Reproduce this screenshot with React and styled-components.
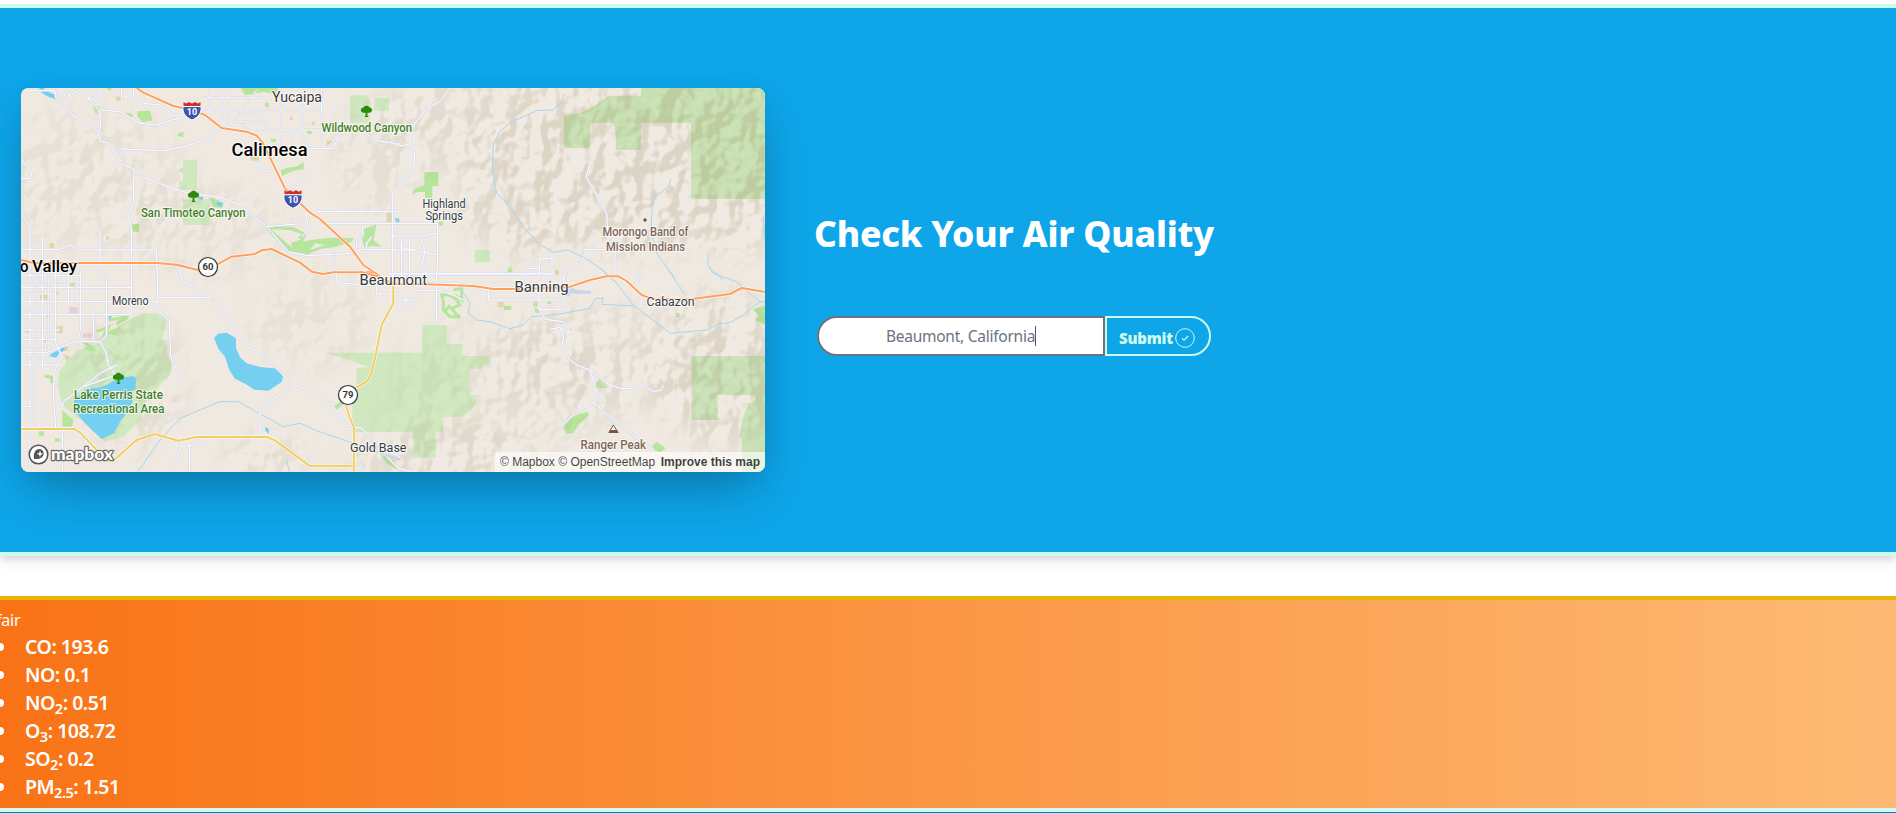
import React from 'react';
import styled, { createGlobalStyle } from 'styled-components';

const GlobalStyle = createGlobalStyle`
  *, *::before, *::after { box-sizing: border-box; }
  body {
    margin: 0;
    background: #fff;
    overflow: hidden;
    font-family: 'Segoe UI', 'Noto Sans', 'Open Sans', sans-serif;
    font-size: 16px;
    line-height: 24px;
  }
`;

const Page = styled.div`
  display: flex;
  flex-direction: column;
  height: 813px;
  padding-top: 4px;
  overflow: hidden;
`;

const Hero = styled.section`
  display: flex;
  align-items: center;
  gap: 47px;
  height: 552px;
  flex: none;
  padding-left: 21px;
  background: #0ea5e9;
  border-top: 4px solid #ccfbf1;
  border-bottom: 4px solid #ccfbf1;
  box-shadow: 0 4px 6px -1px rgba(0, 0, 0, 0.1), 0 6px 12px 0 rgba(0, 0, 0, 0.07);
`;

const MapCard = styled.div`
  position: relative;
  width: 744px;
  height: 384px;
  flex: none;
  border-radius: 8px;
  background: #efe9e1;
  box-shadow: 0 25px 50px -12px rgba(0, 0, 0, 0.25), 0 10px 30px rgba(0, 0, 0, 0.07);
`;

const MapCanvas = styled.svg`
  display: block;
  width: 744px;
  height: 384px;
  border-radius: 8px;
`;

const Attribution = styled.div`
  position: absolute;
  right: 0;
  bottom: 0;
  display: flex;
  justify-content: space-between;
  width: 270px;
  height: 20px;
  padding: 0 5px;
  border-radius: 0 0 8px 0;
  background: rgba(255, 255, 255, 0.6);
  color: rgba(0, 0, 0, 0.75);
  font: 12px/20px 'Liberation Sans', Arial, sans-serif;
  white-space: nowrap;
`;

const Land = styled.path`
  fill: ${(p) => p.$fill || '#d0e8bf'};
`;
const Casing = styled.path`
  fill: none;
  stroke: #d6d9ea;
  stroke-width: ${(p) => p.$w + 4};
  stroke-linejoin: round;
`;
const Street = styled.path`
  fill: none;
  stroke: #fff;
  stroke-width: ${(p) => p.$w};
  stroke-linejoin: round;
`;
const HighwayHalo = styled.path`
  fill: none;
  stroke: #fff;
  stroke-opacity: 0.75;
  stroke-width: 10;
  stroke-linejoin: round;
`;
const Highway = styled.path`
  fill: none;
  stroke: ${(p) => p.$color};
  stroke-width: ${(p) => p.$w || 6};
  stroke-linejoin: round;
`;
const Stream = styled.path`
  fill: none;
  stroke: #a9d5ef;
  stroke-width: 3;
`;
const Label = styled.text`
  font-family: Roboto, 'Liberation Sans', sans-serif;
  font-size: ${(p) => p.$size || 12}px;
  font-weight: ${(p) => p.$weight || 400};
  fill: ${(p) => p.$color || '#333b42'};
  stroke: rgba(255, 255, 255, 0.75);
  stroke-width: 2px;
  stroke-linejoin: round;
  paint-order: stroke;
`;

const Road = ({ d, w = 4 }) => (
  <>
    <Casing d={d} $w={w} />
    <Street d={d} $w={w} />
  </>
);
const Freeway = ({ d, color = '#ff9f5a', w }) => (
  <>
    <HighwayHalo d={d} />
    <Highway d={d} $color={color} $w={w} />
  </>
);

/* Each sheet of the map is drawn at three units to the pixel. */
const NW = 'translate(0 70) scale(.33333)';
const NE = 'translate(390 70) scale(.33333)';
const SW = 'translate(0 270) scale(.33333)';
const SE = 'translate(390 270) scale(.33333)';

const Tree = ({ x, y }) => (
  <g transform={`translate(${x} ${y})`} fill="#2b8a0b">
    <path d="M-5.5-.5C-6-3-4-4-3-4-2-6.500 2-6.500 3-4 5-4 6-2.500 5.300-.5 4.500 1.500 2 1.200.9 1.200V4l1.200 1.500h-4.200L-.9 4V1.200C-2 1.200-4.800 1.500-5.500-.5Z" />
  </g>
);

const Interstate = ({ x, y }) => (
  <g transform={`translate(${x} ${y})`}>
    <path d="M-8.500-9 -6-7.500 -3-9 0-7.500 3-9 6-7.500 8.500-9V-5H-8.500Z" fill="#cf2f2b" />
    <path d="M-9-4.500H9C10 2 6 6.500 0 9-6 6.500-10 2-9-4.500Z" fill="#3f55ac" stroke="#fff" strokeWidth="1" />
    <text y="4" textAnchor="middle" fontFamily="Roboto, sans-serif" fontSize="9" fontWeight="700" fill="#fff">10</text>
  </g>
);

const StateRoute = ({ x, y, n }) => (
  <g transform={`translate(${x} ${y})`}>
    <circle r="9.500" fill="#fff" stroke="#333" strokeWidth="1.200" />
    <text y="3.400" textAnchor="middle" fontFamily="Roboto, sans-serif" fontSize="9.500" fontWeight="700" fill="#333">{n}</text>
  </g>
);

const labels = [
  { t: 'Yucaipa', x: 272, y: 102, w: 50, size: 15 },
  { t: 'Calimesa', x: 231.5, y: 155.5, w: 76, size: 17.5, weight: 500, color: '#000' },
  { t: 'o', x: 20, y: 272, w: 8.5, size: 16.5, weight: 500, color: '#000' },
  { t: 'Valley', x: 32, y: 272, w: 45, size: 16.5, weight: 500, color: '#000' },
  { t: 'Beaumont', x: 359.5, y: 285.3, w: 67.5, size: 15 },
  { t: 'Banning', x: 514.5, y: 292, w: 54, size: 15 },
  { t: 'Cabazon', x: 646.5, y: 306, w: 48, size: 12.5 },
  { t: 'Moreno', x: 112, y: 305, w: 36.500, size: 12 },
  { t: 'Highland', x: 422.5, y: 208, w: 43, size: 12 },
  { t: 'Springs', x: 425.5, y: 220, w: 37.5, size: 12 },
  { t: 'Gold Base', x: 350, y: 451.7, w: 56.500, size: 12.5 },
  { t: 'Wildwood Canyon', x: 321.5, y: 131.500, w: 90.5, weight: 500, color: '#438126' },
  { t: 'San Timoteo Canyon', x: 141, y: 217, w: 104.500, weight: 500, color: '#438126' },
  { t: 'Lake Perris State', x: 74, y: 399, w: 89, weight: 500, color: '#438126' },
  { t: 'Recreational Area', x: 73, y: 413, w: 91.500, weight: 500, color: '#438126' },
  { t: 'Morongo Band of', x: 602.5, y: 236.3, w: 86, weight: 500, color: '#7e6657' },
  { t: 'Mission Indians', x: 606, y: 250.5, w: 79, weight: 500, color: '#7e6657' },
  { t: 'Ranger Peak', x: 580.5, y: 449.3, w: 65.500, weight: 500, color: '#7e6657' },
];

function AreaMap() {
  return (
    <MapCanvas viewBox="21 88 744 384" role="img" aria-label="Map of Beaumont, California">
      <defs>
        <filter id="relief" x="0" y="0" width="1" height="1" colorInterpolationFilters="sRGB">
          <feTurbulence type="fractalNoise" baseFrequency="0.034 0.032" numOctaves="3" seed="23" />
          <feDiffuseLighting surfaceScale="24" diffuseConstant="1" lightingColor="#fff" result="lit">
            <feDistantLight azimuth="215" elevation="45" />
          </feDiffuseLighting>
          <feColorMatrix type="matrix" values="0 0 0 0 .66  0 0 0 0 .61  0 0 0 0 .46  -1.500 0 0 0 1.060" />
          <feComponentTransfer>
            <feFuncA type="discrete" tableValues="0 .08 .14 .18 .23 .28" />
          </feComponentTransfer>
        </filter>
        <filter id="glints" x="0" y="0" width="1" height="1" colorInterpolationFilters="sRGB">
          <feTurbulence type="fractalNoise" baseFrequency="0.034 0.032" numOctaves="3" seed="23" />
          <feDiffuseLighting surfaceScale="24" diffuseConstant="1" lightingColor="#fff">
            <feDistantLight azimuth="215" elevation="45" />
          </feDiffuseLighting>
          <feColorMatrix type="matrix" values="0 0 0 0 1  0 0 0 0 1  0 0 0 0 .94  2 0 0 0 -1.500" />
          <feComponentTransfer>
            <feFuncA type="discrete" tableValues="0 .1 .18 .24" />
          </feComponentTransfer>
        </filter>
        <radialGradient id="soft">
          <stop offset="0" stopColor="#fff" />
          <stop offset=".6" stopColor="#fff" stopOpacity=".75" />
          <stop offset="1" stopColor="#fff" stopOpacity="0" />
        </radialGradient>
        <mask id="hills" maskUnits="userSpaceOnUse" x="21" y="88" width="744" height="384">
          <g fill="url(#soft)">
            <ellipse cx="660" cy="120" rx="200" ry="95" />
            <ellipse cx="740" cy="165" rx="90" ry="110" />
            <ellipse cx="530" cy="190" rx="90" ry="85" />
            <ellipse cx="470" cy="120" rx="110" ry="70" opacity=".7" />
            <ellipse cx="640" cy="200" rx="120" ry="70" />
            <ellipse cx="380" cy="155" rx="60" ry="70" opacity=".5" />
            <ellipse cx="90" cy="180" rx="120" ry="90" opacity=".5" />
            <ellipse cx="200" cy="230" rx="110" ry="60" opacity=".4" />
            <ellipse cx="310" cy="320" rx="80" ry="65" opacity=".4" />
            <ellipse cx="600" cy="360" rx="130" ry="70" opacity=".7" />
            <ellipse cx="500" cy="390" rx="140" ry="90" opacity=".5" />
            <ellipse cx="720" cy="370" rx="80" ry="100" />
            <ellipse cx="440" cy="460" rx="120" ry="50" opacity=".7" />
            <ellipse cx="265" cy="460" rx="55" ry="40" opacity=".5" />
            <ellipse cx="130" cy="380" rx="70" ry="85" opacity=".7" />
          </g>
        </mask>
      </defs>
      <rect x="21" y="88" width="744" height="384" fill="#efe9e1" />

      {/* parks and forest */}
      <g transform={NE}>
        <Land $fill="#c6deb0" d="M522 137 568 130 610 110 656 77H753V54H1125V387H903V158H753V239H677V185L672 158H600V235H522Z" />
        <Land $fill="#b6e69b" d="M103 306H145V348H127V384H105V366L82 366 66 376 72 358 103 345ZM350 608 360 588 370 608ZM145 455H159V467H147Z" />
        <Land d="M255 540H300V576H255Z" $fill="#cde9bb" />
        <path d="M822 158V108H836V127H847V158M677 185H695V178H705V206H694V238" fill="none" stroke="#b6e69b" strokeWidth="2" />
      </g>
      <g transform={NW}>
        <Land d="M549 269H591V360H537V333H549V309L530 304 549 290ZM549 388H629V465H549ZM1050 76H1100L1112 95 1110 158H1050ZM1122 84H1167V122H1122Z" />
        <Land $fill="#b6e69b" d="M413 124 450 122 458 152 430 155 412 140ZM375 126 400 135 395 145ZM535 190 550 184V202L533 198ZM395 462H417V485H395ZM842 300 868 292 890 290 911 275V298L880 302 846 318ZM628 384 655 390 671 406 664 415 640 410ZM795 98H806V112H795ZM722 54H835L828 70 790 66 760 72 735 76ZM813 206H828V216H813ZM318 54H340L328 62ZM920 183H935V192H922Z" />
        <Land $fill="#b6e69b" fillRule="evenodd" d="M798 473 818 466 880 472 918 490 917 500 908 515 935 510 980 504 1025 503 1062 505 1050 518 1000 532 965 536 925 552 865 546 808 488ZM813 478 878 534 872 520 905 508 892 505 905 492 870 480ZM945 520 930 540 975 525ZM1093 476 1130 463 1120 510 1146 532 1118 527 1095 535 1086 510Z" />
        <Land $fill="#dbd9a9" d="M148 519H162V534H148ZM752 258H777V272H752ZM1160 425H1176V457H1160ZM980 212H998L980 230ZM318 500H327V509H318ZM345 80H362V92H350ZM870 140H878V150H870ZM935 155H945V165H935Z" />
        <Land $fill="#cfdfb4" d="M280 110 300 107 295 132 284 130Z" />
      </g>
      <g transform={SW}>
        <Land d="M400 142 430 130H470L500 148 495 175 487 200 502 230V255L515 280V310L475 350 462 380 430 400 425 445 370 500 315 514 280 480 230 440 187 405 173 345 178 305 205 270 235 240 300 220 340 180Z" />
        <Land d="M1158 248H1200V485H1077V412L1060 370 1130 320 1132 292 1158 294Z" />
        <Land $fill="#b6e69b" d="M187 420 220 450 216 470H187ZM1000 410 1030 388 1028 405 1010 419ZM116 484H132V497H116ZM165 505H179V515H165ZM140 134H150V144H140ZM213 38H225V50H213ZM1140 552 1180 570 1192 600 1160 580Z" />
        <g fill="none" stroke="#b6e69b" strokeWidth="9">
          <path d="M325 150 385 140 350 160M290 185 325 172 300 215M320 190 360 174 338 195M250 215 285 240 255 235M134 318 155 322V340" />
        </g>
        <Land $fill="#dbd9a9" d="M170 168H188V190H170ZM185 230H204V242H185ZM205 42H220V56H205ZM120 75H143V89H120ZM165 64H176V74H165ZM128 204H138V218H128ZM190 252 212 260 200 276ZM75 180H90V188H75Z" />
        <Land $fill="#e9cfda" d="M207 111H234V131H207ZM248 192 275 188V203H250Z" />
      </g>
      <g transform={SE}>
        <Land d="M-192 248H96V165H170V222H217V258H297V280L270 297H236V375H259V405L240 420 217 440H160V486H138V563H70V486H-113V412L-100 360V294L-60 292Z" />
        <Land $fill="#c9e0b6" d="M905 258H1125V605H1055V505L1047 500 1060 440 1075 400 1095 396V375H983V450H905Z" />
        <Land $fill="#b6e69b" d="M520 470 545 440 590 425 598 435 570 460 550 490 530 492ZM787 527 800 515 827 535 812 547 795 542ZM342 107H364V120H342ZM857 129H869V140H857ZM1088 118 1125 108V165L1095 150 1108 138ZM432 113 447 118 445 130 436 128ZM473 92H483V102H473Z" />
        <Land $fill="#c3e4ae" d="M611 352 630 322 655 355Z" />
        <path d="M155 75H180L200 90 210 105 185 115 200 135 210 140H180L160 120V95ZM180 105 165 125M190 60 215 55V90L195 75" fill="none" stroke="#b6e69b" strokeWidth="9" />
        <Land $fill="#dbd9a9" d="M323 95H341V112H323ZM430 93H445V110H430ZM495 0H507V15H495ZM60 15H72V26H60Z" />
        <Land $fill="#cdd4ea" d="M535 50 565 60 603 63V71H540V82L525 75Z" />
      </g>

      <rect x="21" y="88" width="744" height="384" filter="url(#relief)" mask="url(#hills)" />
      <rect x="21" y="88" width="744" height="384" filter="url(#glints)" mask="url(#hills)" />

      {/* lakes */}
      <g transform={SW} fill="#75cff0">
        <path d="M642 204 655 191 680 188 708 205V235L720 262 740 280 780 291 835 296 849 320 845 336 805 362 763 359 737 342 705 326 688 300 675 260 655 236Z" />
        <path d="M345 330 375 322 400 318 409 325 406 358 390 365 398 395 372 440 360 455 342 490 305 507 270 475 238 440 222 415V390L258 358 300 352 320 345Z" />
        <path d="M340 360 372 372 355 390 340 385Z" fill="#dfe5bf" />
        <path d="M148 255 165 245 190 232 196 240 178 250 165 267ZM795 470 806 476 807 492 796 482ZM325 138H336L328 150Z" />
      </g>
      <g transform={NW} fill="#75cff0">
        <path d="M117 54H130L150 68 166 74V88L140 78 125 68ZM650 395 670 398 664 410 650 406ZM593 380 610 382 608 390 597 388ZM1185 443 1198 448V456H1188Z" />
      </g>

      {/* streams */}
      <g transform={NE}>
        <Stream d="M523 72 515 95 490 120 440 122 400 140 360 158 330 185 310 222 307 300 320 370 360 410 400 470 450 525 490 547 535 540 560 553 585 564 640 602 680 640" />
        <Stream d="M842 328 835 350 788 385 783 480 800 550 855 625M955 550 953 585 1000 630M1120 440 1125 510" />
      </g>
      <g transform={SW}>
        <Stream d="M415 604 480 510 540 445 660 395 715 395 850 470 900 460 950 482 1090 530 1200 570M860 570 868 605" />
      </g>
      <g transform={SE}>
        <Stream d="M215 60 240 100 235 130 260 150 300 155 360 176 400 165 425 140 460 138 520 130 600 115 615 85 640 85 635 103 735 108" />
        <Stream d="M630 -5 680 40 730 105 840 190 950 180 985 162 1020 158 1060 135 1110 95 1085 75 1040 35 970 10 955 -10M835 0 885 75M1110 95H1125" />
      </g>

      {/* local streets */}
      <g transform={NW}>
        <Road w={3} d="M64 62H165L168 85 212 130 290 180 302 214 325 218 370 285 405 298 430 322 500 348 560 368 660 382 720 405 800 470 865 545 920 557 1050 551 1085 538H1200" />
        <Road w={3} d="M290 200 302 165 298 120 360 125 420 160 470 165 515 150 565 142M350 248 362 237 490 242 550 230 590 218 622 205 665 170" />
        <Road w={3} d="M402 300 400 400 384 440 395 478V630M64 428 90 475V630M127 498V630M300 480V630M64 538H180L210 525 235 540H470V630M170 62 200 80 240 60 262 85 298 120M200 80 225 54M262 85 300 60M300 60 300 95 262 85M370 80 400 82 430 100 480 105 530 140M365 54V90M400 82V54" />
        <Road w={2} d="M606 120H965V100M610 82H790M665 70V155M682 70V155M628 54V120M720 128 790 135M843 54V230M908 54V200L930 235M965 54V205M700 155 770 60M720 155 745 180H890L910 173H965M850 180 878 185V232M1004 551V630M530 590 540 630M665 170 700 155 790 153 800 165V180" />
        <Road w={3} d="M770 278 785 300 810 305M855 365 900 340 928 297M918 430 925 480 905 500M918 430 950 425H1200M915 440 890 462 800 470M950 440 970 460H1200M930 235H1000L1020 190M1095 160V190L1130 212 1200 222M1070 540V515L1090 495 1087 465M1100 540V520L1115 500M64 265 95 310 92 325 64 325" />
      </g>
      <g transform={NE}>
        <Road w={3} d="M180 54 150 95 110 115 60 180V225L75 250 70 300 8 370V630M0 217 35 228 60 222M600 285 588 320 620 375 650 430 655 520M675 540V612M675 538H585V560L523 612V640M448 566H486V630M448 566V630M408 595H448M408 595V630M0 460H143V630M0 498H90L143 490M8 500 40 535 143 555M35 500V630M58 500V630M0 540H75M90 500 105 540 95 590 120 605M0 614H495M755 612 730 650" />
      </g>
      <g transform={SW}>
        <Road w={3} d="M300 0 320 20V195L300 215H225L185 230 140 248H64M90 0V605M300 215 318 245 325 285 350 320M64 16H240M64 52H395M64 95H472V0M64 133H395V0M472 95V115L508 155 512 260 547 335M128 0V300M166 0V215L185 260 165 300 160 360 167 475 188 490V605M205 0V100M242 0V175L235 205M64 180H180M64 208H170M64 285H175M64 410H90M132 402V475M280 133V210M187 415 190 395 250 350 300 310 350 285M250 350 340 318" />
        <Road w={3} d="M535 -10 550 35 630 80 690 150 730 225 780 245 880 345 940 365 1000 410 1040 465 1085 475 1150 540 1200 560M472 82H630M880 345 780 415V500M430 605 450 560M508 605 545 530V515M568 605V520M545 530 590 525 600 508M930 590V605M1010 0V38L1130 48V72H1200M205 470 220 490 250 500 260 520M64 540H90M1067 590 1100 605" />
        <Road w={2} d="M110 0V240M146 0V240M64 35H240M64 70H160M64 120H160M64 150H120M64 230H140M90 265H180M104 240V475M225 50V95" />
      </g>
      <g transform={SE}>
        <Road w={3} d="M447 115 465 148 520 155 543 190 510 172 478 178M510 172 520 200 515 235 545 245 535 265 560 285 600 300 650 340 690 355 735 357 760 343 790 365 815 360 820 345M600 300 612 340 622 380 612 398 560 425 520 465M612 398 660 440 690 460 730 495 790 540M0 10H490V0M35 -10V40M10 40H200L295 60V90H520V15M447 0V118H525V90M140 0V150M48 85V112L70 115 80 90H10M160 65 190 75 218 90M85 62H150M108 0V35M755 10 735 45M753 75V110H765M-10 560 25 595 60 605" />
      </g>

      {/* highways */}
      <g transform={SW}>
        <Freeway color="#f2cd60" d="M64 477H222L240 487 320 572 345 568 410 510 465 492 535 512 590 501H800L825 511 928 587H1065" />
        <Freeway color="#f2cd60" d="M1180 45V100L1145 165 1128 250 1115 310 1100 335 1070 352M1038 405 1048 440 1063 475 1061 605" />
      </g>
      <g transform={NW}>
        <Freeway d="M410 54 430 68 520 108 575 120 615 135 665 174 740 185 770 197 788 218 855 355 880 380 930 428 960 447 1050 530 1090 585 1140 618" />
        <Freeway d="M64 570 100 579H470L530 584 590 599 625 592 655 582 695 560 765 552 785 541 815 537 900 578 935 605 970 612 1000 607H1125" />
      </g>
      <g transform={SE}>
        <Freeway d="M-90 5 -40 18 10 42 110 43 250 48 310 57H380L535 52 600 30 650 19H685L710 33 755 75 790 88H900L1020 72 1055 54 1125 66" />
      </g>

      <Interstate x={192} y={111} />
      <Interstate x={293} y={199.300} />
      <StateRoute x={208} y={267} n="60" />
      <StateRoute x={348} y={395} n="79" />
      <Tree x={366.500} y={111.500} />
      <Tree x={193.500} y={196.500} />
      <Tree x={118.500} y={378.500} />
      <circle cx="645" cy="220" r="2.200" fill="#7a4f3a" stroke="#fff" strokeWidth=".8" />
      <path d="M609 432.500 613.300 425 618 432.500Z" fill="#fff" stroke="#7a5542" strokeWidth="1" />
      <path d="M610 430 H617 L618.500 433H608.500Z" fill="#7a5542" />

      {labels.map((l) => (
        <Label key={l.t} x={l.x} y={l.y} textLength={l.w} lengthAdjust="spacingAndGlyphs" $size={l.size} $weight={l.weight} $color={l.color}>
          {l.t}
        </Label>
      ))}

      {/* provider logo */}
      <circle cx="38.500" cy="454.500" r="9.300" fill="#fff" stroke="#555" strokeWidth="1.600" />
      <path d="M34 459C33 452 36 449 39.500 449A4.600 4.600 0 0 1 43.500 455C42 458.500 38 459.500 34 459Z" fill="#555" />
      <path d="M40 450.500 40.900 452.900 43.300 453.800 40.900 454.700 40 457.100 39.100 454.700 36.700 453.800 39.100 452.900Z" fill="#fff" />
      <text x="51" y="459.500" textLength="62" lengthAdjust="spacingAndGlyphs" fontFamily="Lato, sans-serif" fontSize="17.500" fontWeight="900" fill="#fff" stroke="#666" strokeWidth="2.400" strokeLinejoin="round" paintOrder="stroke">mapbox</text>
    </MapCanvas>
  );
}

const SearchPanel = styled.div`
  display: flex;
  flex-direction: column;
  align-items: center;
  gap: 63px;
  width: 404px;
  padding-top: 9px;
`;

const Title = styled.h1`
  margin: 0;
  font-size: 35.5px;
  line-height: 40px;
  font-weight: 800;
  letter-spacing: -0.2px;
  color: #fff;
  white-space: nowrap;
`;

const SearchForm = styled.div`
  display: flex;
`;

const LocationField = styled.div`
  display: flex;
  align-items: center;
  justify-content: center;
  width: 288px;
  height: 40px;
  border: 2px solid #6b7280;
  border-radius: 20px 0 0 20px;
  background: #fff;
  color: #6b7280;
  font-size: 15.5px;
  letter-spacing: -0.25px;
`;

const Caret = styled.span`
  width: 1px;
  height: 20px;
  background: #4b5563;
`;

const SubmitButton = styled.button`
  display: flex;
  align-items: center;
  justify-content: center;
  gap: 2px;
  width: 106px;
  height: 40px;
  padding: 3px 2px 0 0;
  border: 2px solid #ccfbf1;
  border-radius: 0 20px 20px 0;
  background: transparent;
  color: #ccfbf1;
  font: 900 15px/24px 'Segoe UI', 'Noto Sans', 'Open Sans', sans-serif;
  letter-spacing: -0.2px;
`;

const Readings = styled.section`
  flex: none;
  height: 212px;
  margin-top: 40px;
  padding-top: 8px;
  border-top: 4px solid #eab308;
  background: linear-gradient(to right, #f97316, #fdba74);
  color: #fff;
`;

const Rating = styled.p`
  margin: 0 0 1px -4px;
  letter-spacing: -0.2px;
`;

const ReadingList = styled.ul`
  margin: 0;
  padding: 0;
  list-style: none;
`;

const Reading = styled.li`
  display: flex;
  align-items: center;
  gap: 21px;
  height: 28px;
  margin-left: -4px;
  font-size: 19.5px;
  line-height: 28px;
  font-weight: 600;
  letter-spacing: -0.5px;

  &::before {
    content: '';
    width: 8px;
    height: 8px;
    border-radius: 50%;
    background: #fff;
  }

  sub {
    position: relative;
    bottom: -0.25em;
    font-size: 75%;
    line-height: 0;
    vertical-align: baseline;
  }
`;

const Footer = styled.footer`
  flex: none;
  height: 40px;
  border-top: 4px solid #ccfbf1;
  background: #0284c7;
`;

const readings = [
  { gas: 'CO', value: '193.6' },
  { gas: 'NO', value: '0.1' },
  { gas: 'NO', sub: '2', value: '0.51' },
  { gas: 'O', sub: '3', value: '108.72' },
  { gas: 'SO', sub: '2', value: '0.2' },
  { gas: 'PM', sub: '2.5', value: '1.51' },
];

export default function App() {
  return (
    <>
      <GlobalStyle />
      <Page>
        <Hero>
          <MapCard>
            <AreaMap />
            <Attribution>
              <span>© Mapbox © OpenStreetMap</span>
              <b>Improve this map</b>
            </Attribution>
          </MapCard>
          <SearchPanel>
            <Title>Check Your Air Quality</Title>
            <SearchForm>
              <LocationField>
                Beaumont, California
                <Caret />
              </LocationField>
              <SubmitButton>
                Submit
                <svg width="20" height="20" viewBox="0 0 20 20" fill="none" stroke="#ccfbf1">
                  <circle cx="10" cy="10" r="9.300" strokeWidth="1" />
                  <path d="M7 10.200 9 12.200 13.200 8" strokeWidth="1.200" />
                </svg>
              </SubmitButton>
            </SearchForm>
          </SearchPanel>
        </Hero>
        <Readings>
          <Rating>fair</Rating>
          <ReadingList>
            {readings.map((r) => (
              <Reading key={r.gas + (r.sub || '')}>
                <span>
                  {r.gas}
                  {r.sub && <sub>{r.sub}</sub>}: {r.value}
                </span>
              </Reading>
            ))}
          </ReadingList>
        </Readings>
        <Footer />
      </Page>
    </>
  );
}
